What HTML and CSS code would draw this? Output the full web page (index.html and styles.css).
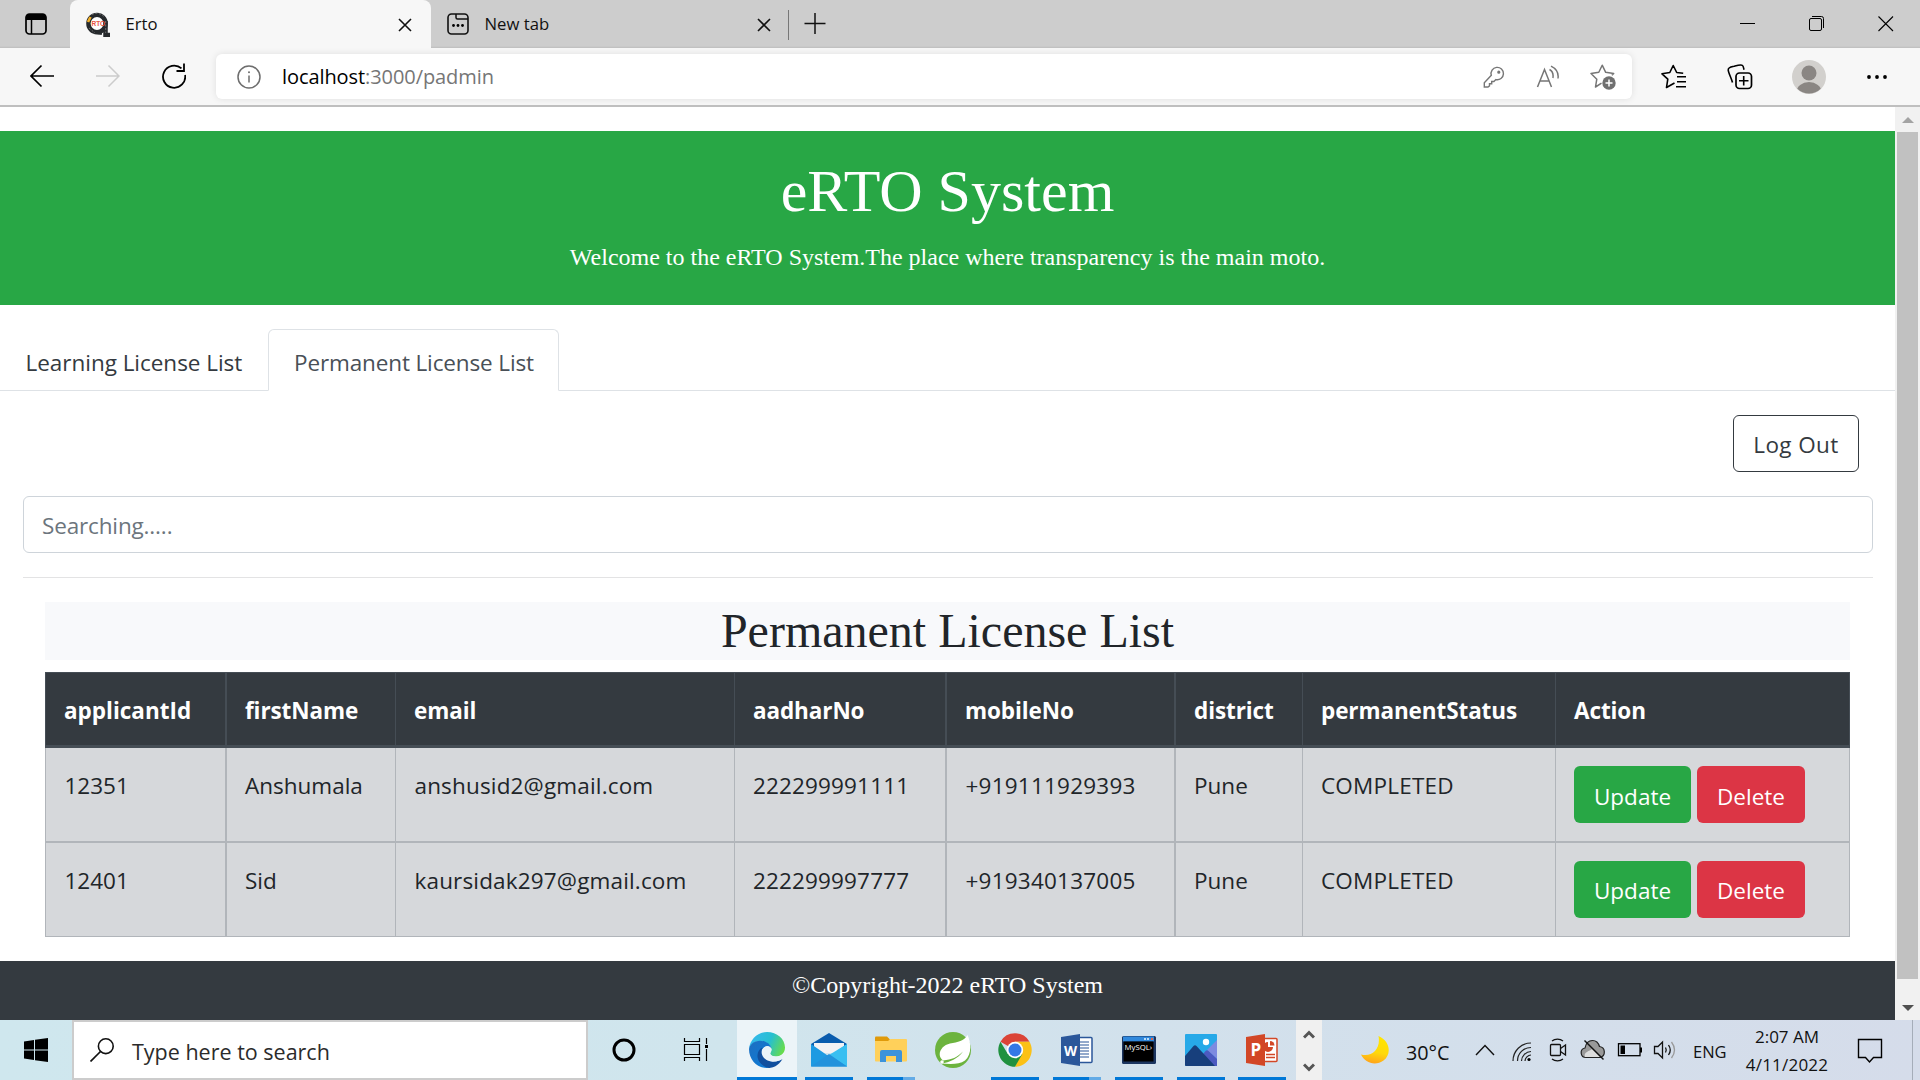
FILE: index.html
```html
<!DOCTYPE html>
<html lang="en">
<head>
<meta charset="utf-8">
<title>Erto</title>
<link rel="stylesheet" href="styles.css">
</head>
<body>
<div class="tabstrip">
  <svg class="tab-actions" width="22" height="22" viewBox="0 0 22 22"><rect x="1" y="1" width="20" height="20" rx="3.5" fill="none" stroke="#000" stroke-width="1.7"/><path d="M1 7V4a3 3 0 0 1 3-3h14a3 3 0 0 1 3 3v3z"/><path d="M6.5 7v14" stroke="#000" stroke-width="1.5"/></svg>
  <div class="tab tab-active">
    <svg class="favicon" width="24" height="25" viewBox="0 0 24 25"><circle cx="11" cy="11.5" r="8.6" fill="#fff" stroke="#26292c" stroke-width="4.4"/><path d="M19.5 9v14H24" fill="none" stroke="#26292c" stroke-width="4.5"/><path d="M9 20l7 1" stroke="#26292c" stroke-width="4"/><path d="M2 10l2.500-5" stroke="#f3b12b" stroke-width="2.6"/><path d="M6 2.600a10 10 0 0 1 12 2M19.700 9v12M3 16l6 5" stroke="#999" stroke-width=".6" fill="none" stroke-dasharray="2 1.500"/><text x="5.500" y="13.500" class="favicon-text">RTO</text></svg>
    <span class="tab-title">Erto</span>
    <svg class="tab-close" width="14" height="14" viewBox="0 0 14 14"><path d="M1 1l12 12M13 1L1 13" stroke="#111" stroke-width="1.6"/></svg>
  </div>
  <div class="tab">
    <svg class="favicon" width="22" height="22" viewBox="0 0 22 22"><rect x="1" y="1" width="20" height="20" rx="3.500" fill="none" stroke="#111" stroke-width="1.6"/><path d="M9 1v3.500a1.500 1.500 0 0 0 1.500 1.500H21" fill="none" stroke="#111" stroke-width="1.500"/><circle cx="6.500" cy="12.500" r="1.400"/><circle cx="11" cy="12.500" r="1.400"/><circle cx="15.500" cy="12.500" r="1.400"/></svg>
    <span class="tab-title">New tab</span>
    <svg class="tab-close" width="14" height="14" viewBox="0 0 14 14"><path d="M1 1l12 12M13 1L1 13" stroke="#111" stroke-width="1.6"/></svg>
  </div>
  <div class="tab-divider"></div>
  <svg class="tab-new" width="22" height="22" viewBox="0 0 22 22"><path d="M.5 10.500h21M11 0v21" stroke="#111" stroke-width="1.5"/></svg>
  <div class="window-controls">
    <svg width="16" height="16" viewBox="0 0 16 16"><path d="M0 7.500h15" stroke="#000"/></svg>
    <svg width="16" height="16" viewBox="0 0 16 16"><rect x=".5" y="2.500" width="12" height="12" rx="1.500" fill="none" stroke="#000"/><path d="M3 .5h9.500a2 2 0 0 1 2 2V12" fill="none" stroke="#000"/></svg>
    <svg width="16" height="16" viewBox="0 0 16 16"><path d="M.5.5l14.500 14.500M15 .5L.5 15" stroke="#000" stroke-width="1.100"/></svg>
  </div>
</div>

<div class="toolbar">
  <div class="nav-buttons">
    <svg width="24" height="24" viewBox="0 0 24 24"><path d="M24 12H1M11.500 1.500L1 12l10.500 10.500" fill="none" stroke="#000" stroke-width="1.700"/></svg>
    <svg width="24" height="24" viewBox="0 0 24 24"><path d="M0 12h23M12.500 1.500L23 12 12.500 22.500" fill="none" stroke="#ccc" stroke-width="1.500"/></svg>
    <svg width="24" height="26" viewBox="0 0 24 26"><path d="M19.500 5.400A11.100 11.100 0 1 0 23.100 12" fill="none" stroke="#000" stroke-width="1.800"/><path d="M22 .5v7.500h-7.500" fill="none" stroke="#000" stroke-width="1.800"/></svg>
  </div>
  <div class="address">
    <svg width="24" height="24" viewBox="0 0 24 24"><circle cx="12" cy="12" r="11" fill="none" stroke="#6d6d6d" stroke-width="1.500"/><path d="M12 10.500V17.500" stroke="#6d6d6d" stroke-width="1.500"/><circle cx="12" cy="7.300" r="1" fill="#6d6d6d"/></svg>
    <span class="url">localhost<span class="url-path">:3000/padmin</span></span>
    <div class="address-actions">
      <svg width="22" height="22" viewBox="0 0 22 22" fill="none" stroke="#767676" stroke-width="1.400"><path d="M8.300 9.300a6.200 6.200 0 1 1 4.600 4.300l-2 1.900H8.700v2.200H6.500v2.200L5 21H1.300v-4.300z"/><circle cx="15.800" cy="6.200" r=".9" fill="#767676"/></svg>
      <svg width="24" height="24" viewBox="0 0 24 24" fill="none" stroke="#767676" stroke-width="1.500"><path d="M1.500 22L8.500 4.500 15.500 22M4 16h9M13.500 4.500c3 1.700 4 5 3.400 8.500M15 1.200c5.500 2.700 7.800 7 7 12.300"/></svg>
      <svg width="26" height="26" viewBox="0 0 26 26"><path d="M11.500 19.200L5.500 23l1.300-7.800L1 9.500l7.800-1.200L12.200 1.200l3.500 7.100 8 1.200-1.800 1.800" fill="none" stroke="#767676" stroke-width="1.500" stroke-linejoin="round"/><circle cx="19" cy="19" r="6.700" fill="#707070"/><path d="M15.500 19h7M19 15.500v7" stroke="#fff" stroke-width="1.500"/></svg>
    </div>
  </div>
  <div class="toolbar-actions">
    <svg width="26" height="26" viewBox="0 0 26 26"><path d="M13.500 19L5.500 23.500l1.300-8.300L1 9.800l7.800-1.300L12.200 1.500l3.500 7 6.500.8M16 12.700h9M16 17.700h9M15 22.700h10" fill="none" stroke="#000" stroke-width="1.600" stroke-linejoin="round"/></svg>
    <svg width="26" height="26" viewBox="0 0 26 26"><rect x="9" y="9" width="15.500" height="15.500" rx="3.500" fill="none" stroke="#000" stroke-width="1.700"/><path d="M16.700 12v9.500M12 16.800h9.500M5.500 18.500C4.300 14 .8 7.500 1.200 5.500 1.600 3.200 4 3 7 2.300 10 1.500 14 .2 15.500 1.500c1 .9 1 2.200 1.500 4.300" fill="none" stroke="#000" stroke-width="1.600"/></svg>
    <svg width="34" height="34" viewBox="0 0 34 34"><defs><clipPath id="avatar"><circle cx="17" cy="17" r="16.500"/></clipPath></defs><circle cx="17" cy="17" r="17" fill="#d2d0cd"/><g clip-path="url(#avatar)" fill="#8a8683"><circle cx="17" cy="13" r="7.500"/><ellipse cx="17" cy="32" rx="12.500" ry="10"/></g></svg>
    <svg width="22" height="6" viewBox="0 0 22 6"><circle cx="3" cy="3" r="1.900"/><circle cx="11" cy="3" r="1.900"/><circle cx="19" cy="3" r="1.900"/></svg>
  </div>
</div>

<div class="viewport">
  <div class="page">
    <header class="hero">
      <h1>eRTO System</h1>
      <p>Welcome to the eRTO System.The place where transparency is the main moto.</p>
    </header>
    <nav class="nav-tabs">
      <a class="nav-link">Learning License List</a>
      <a class="nav-link active">Permanent License List</a>
    </nav>
    <div class="content">
      <button class="btn btn-outline">Log Out</button>
      <input class="search" type="text" placeholder="Searching.....">
      <hr>
      <section class="list">
        <h2>Permanent License List</h2>
        <table>
          <colgroup><col class="c-id"><col class="c-name"><col class="c-email"><col class="c-aadhar"><col class="c-mobile"><col class="c-district"><col class="c-status"><col></colgroup>
          <thead>
            <tr><th>applicantId</th><th>firstName</th><th>email</th><th>aadharNo</th><th>mobileNo</th><th>district</th><th>permanentStatus</th><th>Action</th></tr>
          </thead>
          <tbody>
            <tr><td>12351</td><td>Anshumala</td><td class="email">anshusid2@gmail.com</td><td class="num">222299991111</td><td class="phone">+919111929393</td><td>Pune</td><td class="status">COMPLETED</td><td><div class="actions"><button class="btn btn-update">Update</button><button class="btn btn-delete">Delete</button></div></td></tr>
            <tr><td>12401</td><td>Sid</td><td class="email">kaursidak297@gmail.com</td><td class="num">222299997777</td><td class="phone">+919340137005</td><td>Pune</td><td class="status">COMPLETED</td><td><div class="actions"><button class="btn btn-update">Update</button><button class="btn btn-delete">Delete</button></div></td></tr>
          </tbody>
        </table>
      </section>
    </div>
    <footer>©Copyright-2022 eRTO System</footer>
  </div>
  <div class="scrollbar">
    <div class="arrow-up"></div>
    <div class="thumb"></div>
    <div class="arrow-down"></div>
  </div>
</div>

<div class="taskbar">
  <div class="start"><svg width="24" height="24" viewBox="0 0 24 24"><path d="M0 3.500L10 2v9.500H0zM11 1.800L24 0v11.500H11zM0 12.500h10V22L0 20.500zM11 12.500h13V24l-13-1.800z"/></svg></div>
  <div class="task-search">
    <svg width="24" height="24" viewBox="0 0 24 24"><circle cx="15.800" cy="8.200" r="7.400" fill="none" stroke="#111" stroke-width="1.600"/><path d="M10.500 13.500L.5 23.500" stroke="#111" stroke-width="1.700"/></svg>
    <span>Type here to search</span>
  </div>
  <div class="sys"><svg width="26" height="26" viewBox="0 0 26 26"><circle cx="13" cy="13" r="10" fill="none" stroke="#000" stroke-width="3"/></svg></div>
  <div class="sys"><svg width="26" height="26" viewBox="0 0 26 26"><path d="M1.500 1v3.500h15V1M1.500 7.500h15v10h-15zM1.500 24v-3.500h15V24M23.500 1v6M23.500 12v12" fill="none" stroke="#000" stroke-width="1.200"/><path d="M22 8h3v3h-3z"/></svg></div>
  <div class="apps">
    <div class="app app-current">
      <svg width="36" height="36" viewBox="0 0 36 36"><defs><linearGradient id="e1" x1="0" x2="1" y1=".3" y2=".6"><stop stop-color="#35b8ee"/><stop offset=".55" stop-color="#27bfd0"/><stop offset="1" stop-color="#67dc4b"/></linearGradient><linearGradient id="e2" x1="0" x2="1" y1="0" y2="1"><stop stop-color="#1f6fc0"/><stop offset="1" stop-color="#087cd9"/></linearGradient></defs><path d="M0 17C1 7 9 0 18 0c10 0 18 7 18 15.500C36 21 32 24.500 27 24.500c-4 0-6-1.500-5.800-3 .3-1.200 1.300-1.700 1.300-4C22.500 13 17 9 11 9 6 9 2 12 0 17z" fill="url(#e1)"/><path d="M0 17c1-5.500 6-8.300 11-8.300 6 0 10.500 3.300 11.500 8C19 13 14 14.500 12.500 19c-2 7 5 13.500 9 16.500C11 38 0 30 0 17z" fill="url(#e2)"/><path d="M13.500 15.500C11 20 13 28 22 29.500c4.500.7 8.500-.8 11.500-2.500C29 34.500 23 36 20 35.900c-7-1.400-12-7-11.500-12.900.3-4 2.500-6.500 5-7.500z" fill="#104f9e"/><path d="M15.500 15c2.500-2 6-1 7 2 .2 2.500-1.600 3-1.300 4.600.4 1.700 3 3 5.800 3 3.500 0 6-1.200 7-2.600v3.500c-1 1.500-2 2.500-4.500 3.300C24 30.500 17 28 15 23c-1-3-1-6 .5-8z" fill="#eaf3f8"/></svg>
    </div>
    <div class="app app-open">
      <svg width="36" height="34" viewBox="0 0 36 34"><path d="M0 11L18 0l18 11v3H0z" fill="#0a5cad"/><path d="M3 10h30v10H3z" fill="#f2f2f4"/><path d="M0 11l18 12.500L36 11v22.500H0z" fill="#1d9ae2"/><path d="M18 22L36 11v22.500z" fill="#39bff1"/><path d="M0 33.500L18 21l18 12.500z" fill="#2292dc"/></svg>
    </div>
    <div class="app app-multi">
      <svg width="32" height="28" viewBox="0 0 32 28"><path d="M0 1.500Q0 .5 1 .5h11l3 3v4H0z" fill="#e09a0a"/><path d="M0 5h13l2.500-2H31q1 0 1 1v20.500q0 1-1 1H1q-1 0-1-1z" fill="#ffd05a"/><path d="M5 26V16q0-2 2-2h18q2 0 2 2v10h-6v-6H11v6z" fill="#3d93da"/></svg>
    </div>
    <div class="app">
      <svg width="36" height="36" viewBox="0 0 36 36"><circle cx="18" cy="18" r="18" fill="#6cb33e"/><path d="M32.500 3C37 13 36 23 30 28.500 24 33 14 32 6 31.500c9-1 17-5 22-12-6 6-11 8-20 9C1 23 6 13.500 15 11.500 23 10 29 9 32.500 3z" fill="#fff"/><circle cx="7" cy="30" r="1.800" fill="#fff"/></svg>
    </div>
    <div class="app app-open">
      <svg width="34" height="34" viewBox="0 0 34 34"><path d="M17 17L2.500 8.700A16.700 16.700 0 0 1 31.500 8.700H17z" fill="#db4437"/><path d="M17 17H24.200L17 33.700A16.700 16.700 0 0 0 31.500 8.700H17z" fill="#fbc116"/><path d="M17 17l7.200 4.200L17 33.700A16.700 16.700 0 0 1 2.500 8.700L9.800 21z" fill="#20913f"/><circle cx="17" cy="17" r="8.200" fill="#fff"/><circle cx="17" cy="17" r="6.500" fill="#3478e5"/></svg>
    </div>
    <div class="app app-multi">
      <svg width="32" height="32" viewBox="0 0 32 32"><rect x="17" y="3.500" width="14" height="25" rx="1" fill="#fff" stroke="#2b579a" stroke-width="1.500"/><path d="M19 8h9M19 11h9M19 14h9M19 17h9M19 20h9M19 23h9" stroke="#2b579a" stroke-width="1.200"/><path d="M0 3L19 0v32L0 29z" fill="#2b579a"/><text x="3" y="21.500" class="glyph glyph-w">W</text></svg>
    </div>
    <div class="app app-open">
      <svg width="36" height="30" viewBox="0 0 36 30"><rect x="1" y="1" width="34" height="28" rx="1.500" fill="#1b3560"/><rect x="2" y="1.500" width="31" height="5" fill="#3088dc"/><path d="M23 4h2M26 4h2" stroke="#b8dcfa" stroke-width="2"/><path d="M30 4h2" stroke="#df6547" stroke-width="2"/><rect x="2.500" y="6.500" width="30" height="20" fill="#000"/><text x="3.500" y="14.500" class="glyph glyph-sql">MySQL›</text></svg>
    </div>
    <div class="app app-open">
      <svg width="32" height="32" viewBox="0 0 32 32"><rect width="32" height="32" rx="1" fill="#27a9e8"/><path d="M32 6v19L22 16z" fill="#7d8be0"/><path d="M15 24l5.500-7q1.500-1.500 3 0L32 25v7H15z" fill="#4c5ac0"/><path d="M0 22L8.500 12q1.500-1.500 3 0L30 32H1q-1 0-1-1z" fill="#173f7c"/><circle cx="21" cy="8" r="3.200" fill="#fff"/></svg>
    </div>
    <div class="app app-open">
      <svg width="32" height="32" viewBox="0 0 32 32"><rect x="17" y="4.500" width="14" height="23" rx="1" fill="#fff" stroke="#d24726" stroke-width="1.500"/><path d="M20 20.500h9M20 23.500h9" stroke="#d24726" stroke-width="1.400"/><path d="M22 8a5 5 0 1 0 5 5h-5z" fill="#d24726"/><path d="M24 7a4.500 4.500 0 0 1 4.500 4.500H24z" fill="#d24726"/><path d="M0 3L19 0v32L0 29z" fill="#d24726"/><text x="4.500" y="22" class="glyph glyph-p">P</text></svg>
    </div>
  </div>
  <div class="scroller">
    <svg width="12" height="10" viewBox="0 0 12 10"><path d="M1 8.500l5-5 5 5" fill="none" stroke="#555" stroke-width="3"/></svg>
    <svg width="12" height="10" viewBox="0 0 12 10"><path d="M1 1.500l5 5 5-5" fill="none" stroke="#555" stroke-width="3"/></svg>
  </div>
  <div class="tray">
    <svg class="moon" width="28" height="28" viewBox="0 0 28 28"><defs><linearGradient id="mn" x1=".7" y1="0" x2=".5" y2="1"><stop stop-color="#ffe600"/><stop offset=".6" stop-color="#ffd90a"/><stop offset="1" stop-color="#ffa51a"/></linearGradient></defs><path d="M17.500 0C29 5 31 18 22.500 24.500 15 30 4 27.500 0 18.500 11 21.500 20 13 17.500 0z" fill="url(#mn)"/></svg>
    <span class="temp">30°C</span>
    <svg class="chev" width="20" height="12" viewBox="0 0 20 12"><path d="M1 11l9-9.500 9 9.500" fill="none" stroke="#111" stroke-width="1.400"/></svg>
    <svg class="wifi" width="20" height="20" viewBox="0 0 20 20" fill="none" stroke="#222" stroke-width="1.200"><path d="M1 19C1 9 9 1 19 1M5.500 19C5.500 11.500 11.500 5.500 19 5.500M9.500 19c0-5 4.500-9.500 9.500-9.500M13 19c0-3 3-6 6-6" /><circle cx="17" cy="17.500" r="1.600" fill="#000" stroke="none"/></svg>
    <svg class="cam" width="20" height="24" viewBox="0 0 20 24" fill="none" stroke="#111" stroke-width="1.300"><rect x="2.500" y="6.500" width="10" height="11" rx="1"/><path d="M12.500 10.500l5-3.500v10l-5-3.500M4 3c3-2.400 8-2.400 11 0M4 21c3 2.400 8 2.400 11 0"/></svg>
    <svg class="cloud" width="26" height="22" viewBox="0 0 26 22"><path d="M6 18.500a4.800 4.800 0 0 1-1-9.500C6 3.500 9 1.500 12.500 1.500S18.500 4 19.500 7.500a5.600 5.600 0 0 1 .5 11z" fill="#999" stroke="#222" stroke-width="1.200"/><path d="M5 18C3 13 10 12 12 10l8 8z" fill="#ddd"/><path d="M4.500 1.500l19 19" stroke="#111" stroke-width="1.500"/></svg>
    <svg class="battery" width="26" height="14" viewBox="0 0 26 14"><rect x="1.500" y=".7" width="21.500" height="12" fill="none" stroke="#000" stroke-width="1.300"/><path d="M3.500 2.500H8v8.500H3.500zM23 4.500h2v5h-2z"/></svg>
    <svg class="speaker" width="24" height="20" viewBox="0 0 24 20" fill="none" stroke="#111" stroke-width="1.300"><path d="M1.500 6.500H5L9.500 2v16L5 13.500H1.500z"/><path d="M12.500 7.500q1.500 2.500 0 5M15.500 5q3.500 5 0 10"/><path d="M18.500 2q6 8 0 16" stroke="#999"/></svg>
    <span class="lang">ENG</span>
    <div class="clock"><span>2:07 AM</span><span class="date">4/11/2022</span></div>
    <svg class="notif" width="26" height="26" viewBox="0 0 26 26"><path d="M1.500 1.500h23v18h-8l-4 4.500-4-4.500h-7z" fill="none" stroke="#000" stroke-width="1.400"/></svg>
    <div class="peek"></div>
  </div>
</div>
</body>
</html>
```
FILE: styles.css
```css
* { box-sizing: border-box; }
body {
  margin: 0;
  width: 1920px;
  height: 1080px;
  overflow: hidden;
  display: flex;
  flex-direction: column;
  background: #fff;
  font-family: "Open Sans", "Noto Sans", sans-serif;
  color: #212529;
}
svg { display: block; flex: none; }
span { white-space: nowrap; }

/* tab strip */
.tabstrip {
  display: flex;
  align-items: center;
  height: 48px;
  background: linear-gradient(#cdcdcd 46px, #bdbdbd);
  flex: none;
}
.tab-actions { margin: 0 23px 0 25px; }
.tab {
  display: flex;
  align-items: center;
  width: 357px;
  height: 48px;
  padding: 0 17px 0 16px;
}
.tab-active {
  width: 361px;
  background: #f7f7f7;
  border-radius: 8px 8px 0 0;
  padding-right: 19px;
}
.favicon-text { font: bold 6.500px "Liberation Sans", sans-serif; fill: #e8553f; }
.tab-title { font-size: 16.700px; margin-left: 15.500px; padding-bottom: 2px; flex: 1; color: #111; }
.tab-close { margin-top: 2px; }
.tab-divider { width: 1px; height: 30px; background: #777; margin-top: 2px; }
.tab-new { margin-left: 15px; }
.window-controls { display: flex; gap: 53px; margin: 0 26px 0 auto; }

/* toolbar */
.toolbar {
  display: flex;
  align-items: center;
  height: 59px;
  flex: none;
  background: #f7f7f7;
  border-bottom: 2px solid #bfbfbf;
}
.nav-buttons { display: flex; align-items: center; gap: 42px; margin: 0 0 2px 30px; }
.address {
  display: flex;
  align-items: center;
  width: 1416px;
  height: 45px;
  margin-left: 30px;
  padding: 0 16px 0 21px;
  background: #fff;
  border-radius: 6px;
  box-shadow: 0 0 7px rgba(0, 0, 0, .1);
}
.url { margin-left: 21px; font-size: 20px; letter-spacing: -.08px; color: #000; }
.url-path { color: #767676; }
.address-actions { display: flex; align-items: center; gap: 30px; margin-left: auto; }
.address-actions svg:first-child { margin-right: 1px; }
.toolbar-actions { display: flex; align-items: center; gap: 40px; margin-left: 29px; }
.toolbar-actions svg:nth-child(3) { margin-left: -1px; }

/* web page area */
.viewport { display: flex; height: 913px; flex: none; }
.page { width: 1895px; display: flex; flex-direction: column; padding-top: 24px; }
.hero {
  height: 174px;
  padding-top: 24px;
  background: #28a745;
  color: #fff;
  text-align: center;
  font-family: "Liberation Serif", "Times New Roman", serif;
}
h1 { margin: 0 0 12px; font-size: 60px; line-height: 72px; font-weight: 400; }
.hero p { margin: 0; font-size: 24px; line-height: 36px; }
.nav-tabs {
  display: flex;
  height: 62px;
  margin-top: 24px;
  border-bottom: 1px solid #dee2e6;
}
.nav-link {
  height: 62px;
  width: 268px;
  padding: 13px 0 0 25.500px;
  font-size: 22.500px;
  letter-spacing: -.03px;
  line-height: 42px;
  white-space: nowrap;
  color: #343a40;
}
.nav-link.active {
  width: 291px;
  padding: 12px 0 0 25px;
  border: 1px solid #dee2e6;
  border-bottom-color: #fff;
  border-radius: 6px 6px 0 0;
  letter-spacing: -.13px;
  background: #fff;
  color: #495057;
}
.content { display: flex; flex-direction: column; padding: 24px 22px 0 23px; }
.btn {
  height: 57px;
  padding: 2px 0 0;
  border: 0;
  border-radius: 6px;
  font-family: inherit;
  font-size: 22.500px;
  color: #fff;
}
.btn-outline {
  align-self: flex-end;
  width: 126px;
  margin-right: 14px;
  border: 1px solid #343a40;
  background: #fff;
  color: #343a40;
  letter-spacing: .4px;
}
.btn-update { width: 117px; background: #28a745; }
.btn-delete { width: 108px; background: #dc3545; }
tr:first-child .btn { padding-top: 4px; }
.search {
  height: 57px;
  margin-top: 24px;
  padding: 2px 18px 0;
  border: 1px solid #ced4da;
  border-radius: 6px;
  font-family: inherit;
  font-size: 22.500px;
  letter-spacing: -.15px;
}
.search::placeholder { color: #6c757d; opacity: 1; }
hr { width: 100%; height: 1px; margin: 24px 0; border: 0; background: #e3e3e4; }
.list { padding: 0 23px 0 22px; }
h2 {
  margin: 0 0 12px;
  height: 58px;
  background: #f8f9fb;
  font: 400 48px/58px "Liberation Serif", "Times New Roman", serif;
  text-align: center;
}
table {
  width: 100%;
  table-layout: fixed;
  border-collapse: separate;
  border-spacing: 0;
  font-size: 22.500px;
}
.c-id { width: 182px; }
.c-name { width: 169px; }
.c-email { width: 339px; }
.c-aadhar { width: 212px; }
.c-mobile { width: 229px; }
.c-district { width: 127px; }
.c-status { width: 253px; }
th, td { padding: 0 0 0 18px; text-align: left; white-space: nowrap; border: 0 solid #b1b5ba; border-right-width: 1px; }
th { height: 76px; padding-top: 3px; background: #343a40; color: #fff; border-color: #454d55; border-top-width: 1px; border-bottom-width: 3px; font-weight: 700; letter-spacing: -.1px; }
td { height: 95px; padding-top: 17px; vertical-align: top; line-height: 42px; background: #d6d8db; border-bottom-width: 2px; }
td:last-child { padding-top: 18px; }
tr:last-child td { height: 94px; border-bottom-width: 1px; }
thead tr:last-child th { height: 76px; }
th:first-child, td:first-child { border-left-width: 1px; }
th:first-child { letter-spacing: 0; }
th:first-child, td:first-child, th:nth-child(4), td:nth-child(4), th:nth-child(5), td:nth-child(5) { border-right-width: 2px; }
td:first-child { padding-left: 18.500px; }
.email { letter-spacing: .16px; padding-left: 18.500px; }
.num { letter-spacing: .15px; }
.phone { letter-spacing: .22px; padding-left: 18.500px; }
.status { letter-spacing: .2px; }
.actions { display: flex; gap: 6px; }
footer {
  height: 59px;
  margin-top: 24px;
  padding-top: 6px;
  background: #343a40;
  color: #fff;
  text-align: center;
  font: 24px/36px "Liberation Serif", "Times New Roman", serif;
}
.scrollbar {
  width: 25px;
  display: flex;
  flex-direction: column;
  align-items: center;
  background: #f1f1f1;
}
.arrow-up { margin-top: 10px; border: 6px solid transparent; border-top: 0; border-bottom-color: #a3a3a3; }
.thumb { width: 21px; height: 847px; margin-top: 9px; background: #c1c1c1; }
.arrow-down { margin-top: 26px; border: 6px solid transparent; border-bottom: 0; border-top-color: #505050; }

/* taskbar */
.taskbar {
  display: flex;
  height: 60px;
  flex: none;
  background: linear-gradient(90deg, #cfe7ee, #d0e5ed 38%, #d2e1ec 60%, #d5dcea);
}
.start { width: 72px; padding: 18px 0 0 24px; }
.task-search {
  display: flex;
  align-items: center;
  gap: 18px;
  width: 516px;
  padding: 0 16px;
  border: 2px solid #ccc;
  background: #fff;
  font-size: 21.500px;
  color: #2b2b2b;
}
.task-search span { padding-top: 2px; }
.sys { width: 72px; display: flex; align-items: center; justify-content: center; }
.apps { display: flex; margin-left: 5px; width: 559px; }
.app {
  display: flex;
  align-items: center;
  justify-content: center;
  width: 62px;
  flex: none;
  background: linear-gradient(#0078d7, #0078d7) center bottom / 0 3px no-repeat;
}
.app-open { background-size: 48px 3px; }
.app-multi { background: linear-gradient(90deg, #0078d7 36px, #63abe6 36px) 7px bottom / 48px 3px no-repeat; }
.app-current { width: 60px; margin-right: 1px; background: linear-gradient(#0078d7, #0078d7) 0 bottom / 100% 3px no-repeat #ecf4f8; }
.app:nth-child(n+8) { width: 61px; }
.glyph { font-family: "Open Sans", sans-serif; fill: #fff; font-weight: 700; }
.glyph-w { font-size: 13.500px; }
.glyph-p { font-size: 17px; }
.glyph-sql { font-size: 7.800px; font-weight: 400; }
.scroller {
  width: 26px;
  display: flex;
  flex-direction: column;
  align-items: center;
  justify-content: space-between;
  padding: 9px 0 7px;
  background: #f0f0f0;
}
.tray { display: flex; align-items: center; color: #111; }
.moon { margin-left: 39px; }
.temp { width: 48px; margin-left: 17px; padding-top: 4px; font-size: 19.800px; }
.chev { margin-left: 21px; }
.wifi { margin-left: 17px; margin-top: 3px; }
.cam { margin-left: 16px; }
.cloud { margin-left: 12px; }
.battery { margin-left: 11px; }
.speaker { margin-left: 10px; }
.lang { width: 34px; margin-left: 16px; padding-top: 2px; font-size: 16.500px; }
.clock {
  display: flex;
  flex-direction: column;
  align-items: center;
  width: 90px;
  margin-left: 15px;
  padding-top: 2px;
  font-size: 17px;
  line-height: 28px;
}
.date { letter-spacing: .2px; }
.notif { margin-left: 25px; margin-top: 1px; }
.peek { width: 1px; height: 60px; margin-left: 29px; background: #a5adb9; }
```
